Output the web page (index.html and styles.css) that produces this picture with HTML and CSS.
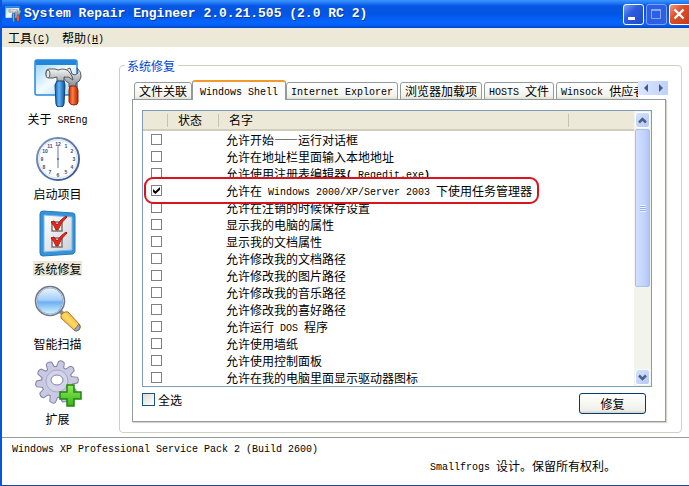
FILE: index.html
```html
<!DOCTYPE html>
<html lang="zh-CN">
<head>
<meta charset="utf-8">
<title>System Repair Engineer</title>
<link rel="stylesheet" href="styles.css">
</head>
<body>
<div class="window">
  <header class="titlebar">
    <svg class="app-icon" viewBox="0 0 48 48" aria-hidden="true"><use href="#tools"/></svg>
    <h1>System Repair Engineer 2.0.21.505 (2.0 RC 2)</h1>
    <div class="controls">
      <button class="ctl" aria-label="最小化"><svg viewBox="0 0 18 18"><path d="M4 12h7v3H4z" fill="#fff"/></svg></button>
      <button class="ctl dim" aria-label="最大化" disabled><svg viewBox="0 0 18 18"><path d="M4.500 5v8.500h9V5" fill="none" stroke="#86a8f4"/><path d="M4 4h10v2H4z" fill="#86a8f4"/></svg></button>
      <button class="ctl close" aria-label="关闭"><svg viewBox="0 0 18 18"><path d="M4.500 4.500l9 9M13.500 4.500l-9 9" stroke="#fff" stroke-width="2.400"/></svg></button>
    </div>
  </header>
  <nav class="menubar">
    <button>工具<span class="en">(<u>C</u>)</span></button>
    <button>帮助<span class="en">(<u>H</u>)</span></button>
  </nav>
  <div class="body">
    <nav class="sidebar">
      <a href="#about">
        <svg viewBox="0 0 48 48" aria-hidden="true">
          <defs>
            <linearGradient id="sky" x1="0" y1="0" x2="1" y2="1"><stop offset="0" stop-color="#8fd0ff"/><stop offset=".5" stop-color="#f4fbff"/><stop offset="1" stop-color="#9dd4fa"/></linearGradient>
            <linearGradient id="steel" x1="0" y1="0" x2="0" y2="1"><stop offset="0" stop-color="#f4f4f4"/><stop offset="1" stop-color="#858b91"/></linearGradient>
            <linearGradient id="blue" x1="0" y1="0" x2="1" y2="0"><stop offset="0" stop-color="#1259ac"/><stop offset=".4" stop-color="#61b6f5"/><stop offset="1" stop-color="#0d4c9b"/></linearGradient>
            <linearGradient id="red" x1="0" y1="0" x2="1" y2="0"><stop offset="0" stop-color="#c42d08"/><stop offset=".4" stop-color="#ff7d3e"/><stop offset="1" stop-color="#b52405"/></linearGradient>
            <g id="tools">
              <path d="M3 1h38q2 0 2 2v31q0 2-2 2H3q-2 0-2-2V3q0-2 2-2z" fill="url(#sky)" stroke="#2688d9" stroke-width="1.500"/>
              <path d="M1.500 6V3q0-2 2-2h37q2 0 2 2v3z" fill="#2386dc"/>
              <path d="M36 9l2 6 3 1 3-2-1-5q5 4 4 9-1 5-5 6v4h-7v-4q-5-2-5-7 0-6 6-8z" fill="url(#steel)" stroke="#565b60"/>
              <path d="M12 13q0-3 3-3h6l3 1q8-3 12 3 3 4 3 7-4-4-9-3v10h-7V18l-4 1h-4q-3 0-3-3z" fill="url(#steel)" stroke="#565b60"/>
              <ellipse cx="14" cy="15" rx="2" ry="4" fill="#e6e6e6" stroke="#666"/>
              <path d="M36 27h6l2 4v12q0 3-4 3t-5-3V31z" fill="url(#red)" stroke="#8d2209"/>
              <path d="M23 22h7l1 4-1 19q0 3-4 3t-4-3l-1-19z" fill="url(#blue)" stroke="#134276"/>
            </g>
          </defs>
          <use href="#tools"/>
        </svg>
        <span>关于<span class="en"> SREng</span></span>
      </a>
      <a href="#startup">
        <svg viewBox="0 0 48 48" aria-hidden="true">
          <defs><linearGradient id="rim" x1="0" y1="0" x2="1" y2="1"><stop offset="0" stop-color="#8197bd"/><stop offset=".5" stop-color="#5879ad"/><stop offset="1" stop-color="#344d82"/></linearGradient></defs>
          <circle cx="24" cy="25" r="21" fill="#fff" stroke="url(#rim)" stroke-width="2"/>
          <circle cx="24" cy="25" r="19" fill="none" stroke="#d5dfef"/>
          <g fill="#344d7c" font-family="Liberation Sans, sans-serif" font-size="5" font-weight="700" text-anchor="middle">
            <text x="24" y="12">12</text><text x="32" y="14">1</text><text x="38" y="19">2</text><text x="40" y="27">3</text><text x="38" y="35">4</text><text x="32" y="40">5</text><text x="24" y="43">6</text><text x="16" y="40">7</text><text x="10" y="35">8</text><text x="8" y="27">9</text><text x="11" y="19">10</text><text x="16" y="14">11</text>
          </g>
          <path d="M24 11v23" stroke="#6b7c9f"/><circle cx="24" cy="25" r="1" fill="#526890"/>
        </svg>
        <span>启动项目</span>
      </a>
      <a href="#repair" class="current" aria-current="page">
        <svg viewBox="0 0 48 48" aria-hidden="true">
          <defs><linearGradient id="board" x1="0" y1="0" x2="1" y2="1"><stop offset="0" stop-color="#fff"/><stop offset="1" stop-color="#c9d0d8"/></linearGradient></defs>
          <path d="M9 2l30 2q2 0 2 3v35q0 2-2 3L9 47q-3 0-3-3V5q0-3 3-3z" fill="#3591d8" stroke="#2479bd"/>
          <path d="M10 6l28 2v33l-28 2z" fill="url(#board)" stroke="#78b8e8"/>
          <g id="tick"><path d="M18 13h10v9H18z" fill="#f4f4f4" stroke="#77736d" stroke-width="1.500"/><path d="M17 13l3-1 3 4q4-6 9-9l1 1q-6 5-9 13h-2q-2-5-5-8z" fill="#e22a1c" stroke="#b41410"/></g>
          <use href="#tick" y="16"/>
        </svg>
        <span>系统修复</span>
      </a>
      <a href="#scan">
        <svg viewBox="0 0 48 48" aria-hidden="true">
          <defs>
            <linearGradient id="lens" x1="0" y1="0" x2="0" y2="1"><stop offset="0" stop-color="#f0f9ff"/><stop offset=".45" stop-color="#a4cff8"/><stop offset=".55" stop-color="#70b1f1"/><stop offset="1" stop-color="#d8fcff"/></linearGradient>
            <linearGradient id="gold" x1="0" y1="1" x2="1" y2="0"><stop offset="0" stop-color="#d97b0b"/><stop offset=".5" stop-color="#ffdc64"/><stop offset="1" stop-color="#e28813"/></linearGradient>
          </defs>
          <path d="M26 27l6 6" stroke="#8c8990" stroke-width="4"/>
          <path d="M34 28l12 13q1 3-1 5-3 2-5 0L27 34q-1-2 2-5 3-2 5-1z" fill="url(#gold)" stroke="#ad711d"/>
          <path d="M45 40q2 3 0 6-3 2-5 0z" fill="#a5a5b2" stroke="#777684"/>
          <circle cx="16" cy="17" r="14" fill="url(#lens)" stroke="#707689" stroke-width="2.500"/>
          <circle cx="16" cy="17" r="13.500" fill="none" stroke="#c9d3e6" stroke-width="1"/>
        </svg>
        <span>智能扫描</span>
      </a>
      <a href="#extend">
        <svg viewBox="0 0 48 48" aria-hidden="true">
          <defs>
            <linearGradient id="green" x1="0" y1="0" x2="0" y2="1"><stop offset="0" stop-color="#93ed58"/><stop offset="1" stop-color="#32b51b"/></linearGradient>
            <path id="tooth" d="M19 10l1-7q2-2 5 0l1 7z"/>
            <g id="teeth">
              <use href="#tooth" transform="rotate(14 23 23)"/><use href="#tooth" transform="rotate(50 23 23)"/><use href="#tooth" transform="rotate(86 23 23)"/><use href="#tooth" transform="rotate(122 23 23)"/><use href="#tooth" transform="rotate(158 23 23)"/><use href="#tooth" transform="rotate(194 23 23)"/><use href="#tooth" transform="rotate(230 23 23)"/><use href="#tooth" transform="rotate(266 23 23)"/><use href="#tooth" transform="rotate(302 23 23)"/><use href="#tooth" transform="rotate(338 23 23)"/>
            </g>
          </defs>
          <g fill="#c9cae2" stroke="#7f81a8" stroke-width="2"><use href="#teeth"/><circle cx="23" cy="23" r="15"/></g>
          <g fill="#c9cae2"><use href="#teeth"/><circle cx="23" cy="23" r="15"/></g>
          <circle cx="23" cy="22" r="11" fill="#d3d4e8" stroke="#a5a7c8"/>
          <ellipse cx="23" cy="21" rx="6" ry="5" fill="#fff" stroke="#7f81a8"/>
          <path d="M33 26h7v7h7v7h-7v7h-7v-7h-7v-7h7z" fill="url(#green)" stroke="#24830f" stroke-width="1.500"/>
        </svg>
        <span>扩展</span>
      </a>
    </nav>
    <fieldset class="group">
      <legend>系统修复</legend>
      <div class="tabstrip">
        <div class="tabs" role="tablist">
          <button role="tab">文件关联</button>
          <button role="tab" class="active" aria-selected="true"><span class="en">Windows Shell</span></button>
          <button role="tab"><span class="en">Internet Explorer</span></button>
          <button role="tab">浏览器加载项</button>
          <button role="tab"><span class="en">HOSTS </span>文件</button>
          <button role="tab"><span class="en">Winsock </span>供应者</button>
        </div>
        <div class="spinner">
          <button aria-label="向左"><svg viewBox="0 0 8 8"><path d="M6 0v8L2 4z"/></svg></button>
          <button aria-label="向右"><svg viewBox="0 0 8 8"><path d="M2 0v8l4-4z"/></svg></button>
        </div>
      </div>
      <div class="panel">
        <div class="list">
          <table>
            <colgroup><col class="c-check"><col class="c-state"><col class="c-name"><col></colgroup>
            <thead><tr><th></th><th>状态</th><th>名字</th><th></th></tr></thead>
            <tbody>
              <tr><td><input type="checkbox" aria-labelledby="r1"></td><td></td><td colspan="2" id="r1">允许开始——运行对话框</td></tr>
              <tr><td><input type="checkbox" aria-labelledby="r2"></td><td></td><td colspan="2" id="r2">允许在地址栏里面输入本地地址</td></tr>
              <tr><td><input type="checkbox" aria-labelledby="r3"></td><td></td><td colspan="2" id="r3">允许使用注册表编辑器<span class="en"><b>(</b> Regedit.exe<b>)</b></span></td></tr>
              <tr class="marked"><td><span class="ring"></span><input type="checkbox" aria-labelledby="r4" checked></td><td></td><td colspan="2" id="r4">允许在<span class="en"> Windows 2000/XP/Server 2003 </span>下使用任务管理器</td></tr>
              <tr><td><input type="checkbox" aria-labelledby="r5"></td><td></td><td colspan="2" id="r5">允许在注销的时候保存设置</td></tr>
              <tr><td><input type="checkbox" aria-labelledby="r6"></td><td></td><td colspan="2" id="r6">显示我的电脑的属性</td></tr>
              <tr><td><input type="checkbox" aria-labelledby="r7"></td><td></td><td colspan="2" id="r7">显示我的文档属性</td></tr>
              <tr><td><input type="checkbox" aria-labelledby="r8"></td><td></td><td colspan="2" id="r8">允许修改我的文档路径</td></tr>
              <tr><td><input type="checkbox" aria-labelledby="r9"></td><td></td><td colspan="2" id="r9">允许修改我的图片路径</td></tr>
              <tr><td><input type="checkbox" aria-labelledby="r10"></td><td></td><td colspan="2" id="r10">允许修改我的音乐路径</td></tr>
              <tr><td><input type="checkbox" aria-labelledby="r11"></td><td></td><td colspan="2" id="r11">允许修改我的喜好路径</td></tr>
              <tr><td><input type="checkbox" aria-labelledby="r12"></td><td></td><td colspan="2" id="r12">允许运行<span class="en"> DOS </span>程序</td></tr>
              <tr><td><input type="checkbox" aria-labelledby="r13"></td><td></td><td colspan="2" id="r13">允许使用墙纸</td></tr>
              <tr><td><input type="checkbox" aria-labelledby="r14"></td><td></td><td colspan="2" id="r14">允许使用控制面板</td></tr>
              <tr><td><input type="checkbox" aria-labelledby="r15"></td><td></td><td colspan="2" id="r15">允许在我的电脑里面显示驱动器图标</td></tr>
            </tbody>
          </table>
          <div class="scrollbar">
            <button aria-label="向上"><svg viewBox="0 0 9 9"><path d="M1 6.500l3.500-3.500 3.500 3.500"/></svg></button>
            <div class="track"><div class="thumb"><i></i></div></div>
            <button aria-label="向下"><svg viewBox="0 0 9 9"><path d="M1 2.500l3.500 3.500 3.500-3.500"/></svg></button>
          </div>
        </div>
        <div class="actions">
          <label><input type="checkbox">全选</label>
          <button class="push">修复</button>
        </div>
      </div>
    </fieldset>
  </div>
  <footer class="status">
    <p><span class="en">Windows XP Professional Service Pack 2 (Build 2600)</span></p>
    <p class="credit"><span class="en">Smallfrogs </span>设计。保留所有权利。</p>
  </footer>
</div>
</body>
</html>
```
FILE: styles.css
```css
* { box-sizing: border-box; }

body {
  margin: 0;
  background: #fff;
  color: #000;
  font: 12px/17px "Noto Sans CJK SC", sans-serif;
}

button {
  margin: 0;
  padding: 0;
  border: 0;
  background: none;
  color: inherit;
  font: inherit;
}

svg { display: block; }

.en {
  font-family: "Liberation Mono", monospace;
  font-size: 10px;
  line-height: 8px;
  vertical-align: 1px;
  white-space: pre;
}

.window {
  display: flex;
  flex-direction: column;
  min-height: 100vh;
  overflow: hidden;
  border-left: 2px solid #0855dd;
  border-bottom: 1px solid #1d43a0;
}

/* Title bar */
.titlebar {
  display: flex;
  align-items: center;
  height: 28px;
  padding-left: 3px;
  background: linear-gradient(#3c97ff 0, #2a82f8 2px, #0556e2 6px, #0355e4 14px, #0565ff 22px, #0560f5 25px, #0143c8 28px);
  color: #fff;
}

.app-icon {
  width: 16px;
  height: 16px;
  margin-right: 3px;
}

h1 {
  flex: 1;
  margin: 0;
  font: bold 13px/28px "Liberation Mono", monospace;
  text-shadow: 1px 1px #0a3a9c;
  white-space: nowrap;
}

.controls {
  display: flex;
  gap: 2px;
}

.ctl {
  width: 21px;
  height: 21px;
  border: 1px solid #fff;
  border-radius: 3px;
  background: linear-gradient(135deg, #7ea2f2, #2c5ce0 40%, #1f49c8);
}

.ctl.dim {
  border-color: #7fa2f2;
  background: #2c5fe4;
}

.ctl.close {
  width: 20px;
  border-right: 0;
  border-radius: 3px 0 0 3px;
  background: linear-gradient(135deg, #f09a80, #df4f2c 40%, #c43a18);
}

.ctl svg {
  width: 18px;
  height: 18px;
}

/* Menu */
.menubar {
  display: flex;
  gap: 12px;
  height: 19px;
  padding-left: 6px;
  background: #ece9d8;
}

.menubar button { line-height: 19px; }

/* Body */
.body {
  display: flex;
  flex: 1;
}

.sidebar {
  display: flex;
  flex-direction: column;
  width: 111px;
  padding-top: 12px;
}

.sidebar a {
  display: flex;
  flex-direction: column;
  align-items: center;
  height: 75px;
  color: #000;
  text-decoration: none;
}

.sidebar svg {
  width: 48px;
  height: 48px;
  margin-bottom: 4px;
}

.sidebar a > span {
  height: 15px;
  line-height: 15px;
}

.sidebar .current > span { background: #ece9d8; }

.group {
  flex: 1;
  min-width: 0;
  margin: 10px 7px 4px 6px;
  padding: 6px 15px 9px 12px;
  border: 1px solid #d0d0bf;
  border-radius: 4px;
}

legend {
  margin-left: -7px;
  padding: 0 3px 0 2px;
  color: #0046d5;
}

/* Tabs */
.tabstrip {
  display: flex;
  align-items: flex-start;
  height: 19px;
}

.tabs {
  display: flex;
  flex: 1;
  align-items: flex-end;
  gap: 2px;
  min-width: 0;
  height: 20px;
  padding-left: 2px;
  overflow: hidden;
}

.tabs button {
  flex: none;
  height: 18px;
  padding: 0 4px;
  border: 1px solid #919b9c;
  border-radius: 3px 3px 0 0;
  background: linear-gradient(#fff, #f3f3ec 80%, #e2e0d4);
  line-height: 16px;
}

.tabs .active {
  height: 20px;
  margin: 0 -2px;
  padding: 0 7px;
  border-top: 2px solid #f09a2c;
  border-bottom: 0;
  background: #fcfcfe;
}

.spinner {
  display: flex;
  width: 30px;
  height: 14px;
  margin: 1px -2px 0 0;
  background: linear-gradient(90deg, #dce7ff, #bfd0fb);
}

.spinner button {
  display: flex;
  flex: 1;
  align-items: center;
  justify-content: center;
}

.spinner svg {
  width: 8px;
  height: 8px;
  fill: #40598f;
}

.panel {
  padding: 10px 13px 7px 9px;
  border: 1px solid #919b9c;
  box-shadow: 1px 1px 1px #d8d6ca;
  background: #fff;
}

/* List */
.list {
  display: flex;
  border: 1px solid #7f9db9;
}

table {
  flex: 1;
  min-width: 0;
  table-layout: fixed;
  border-collapse: collapse;
}

.c-check { width: 25px; }
.c-state { width: 51px; }
.c-name { width: 350px; }

th {
  position: relative;
  height: 19px;
  padding: 0 0 0 10px;
  border-bottom: 2px solid #d0cdba;
  background: #ece9d8;
  font-weight: 400;
  text-align: left;
  line-height: 18px;
}

th:not(:last-child)::after {
  content: "";
  position: absolute;
  top: 3px;
  right: 0;
  bottom: 2px;
  border-right: 1px solid #c7c5b2;
}

td {
  height: 17px;
  padding: 0 0 0 8px;
  line-height: 17px;
  white-space: nowrap;
}

td[colspan] { padding-left: 7px; }

input[type="checkbox"] {
  display: block;
  width: 11px;
  height: 11px;
  margin: 0;
  appearance: none;
  border: 1px solid #808080;
  background: #fff;
}

input[type="checkbox"]:checked { position: relative; }

input[type="checkbox"]:checked::after {
  content: "";
  position: absolute;
  inset: 1px;
  background: #000;
  clip-path: polygon(0 30%, 35% 60%, 100% 0, 100% 40%, 35% 100%, 0 70%);
}

.marked {
  position: relative;
  z-index: 1;
}

.ring {
  position: absolute;
  z-index: -1;
  top: -5px;
  left: 1px;
  width: 395px;
  height: 27px;
  border: 2px solid #d8141c;
  border-radius: 9px;
  background: #fff;
}

.scrollbar {
  display: flex;
  flex-direction: column;
  width: 17px;
  padding: 1px;
  background: #f3f3ee;
}

.scrollbar button {
  display: flex;
  align-items: center;
  justify-content: center;
  height: 16px;
  border: 1px solid #fff;
  border-radius: 3px;
  background: linear-gradient(135deg, #d6e2ff, #b4c8f8);
}

.scrollbar svg {
  width: 9px;
  height: 9px;
  fill: none;
  stroke: #4d6185;
  stroke-width: 2.5;
}

.track {
  flex: 1;
  padding-top: 1px;
}

.thumb {
  display: flex;
  align-items: center;
  justify-content: center;
  height: 66%;
  border: 1px solid #a9bff0;
  border-radius: 2px;
  background: linear-gradient(90deg, #d2dfff, #c3d3fd 60%, #b0c4f4);
}

.thumb i {
  width: 6px;
  height: 7px;
  background: repeating-linear-gradient(#eef4fe 0 1px, #8cb0f8 1px 2px);
}

/* Actions */
.actions {
  display: flex;
  align-items: flex-start;
  justify-content: space-between;
  padding: 6px 6px 0 0;
}

.actions label {
  display: flex;
  align-items: center;
  gap: 3px;
  height: 13px;
}

.actions label input {
  width: 13px;
  height: 13px;
  border-color: #1c5180;
  background: linear-gradient(135deg, #dcdcd7, #fff);
}

.push {
  width: 67px;
  height: 21px;
  border: 1px solid #003c74;
  border-radius: 3px;
  background: linear-gradient(#fff, #f0f0ea 85%, #d6d0c5);
  line-height: 18px;
}

/* Status */
.status {
  height: 48px;
  padding: 1px 73px 0 10px;
  border-top: 1px solid #919b9c;
}

.status p { margin: 0; }
.status .credit { margin-top: 1px; text-align: right; }
```
